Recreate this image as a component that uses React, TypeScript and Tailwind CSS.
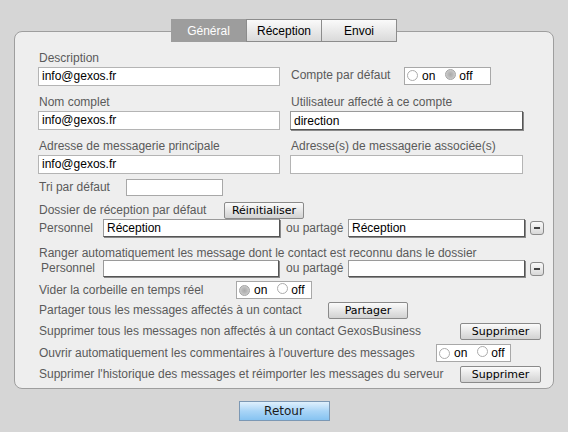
import React from "react";

const label = "text-[12px] leading-[15px] text-[#5a5a5a] whitespace-nowrap";
const field =
  "h-[19px] bg-white border border-[#b4b4b4] pl-[3px] text-[12px] leading-[17px] text-black";
const deepField =
  "bg-white border border-[#9a9a9a] border-r-[#555] border-b-[#555] shadow-[1px_1px_0_#8a8a8a] pl-[3px] text-[12px] text-black flex items-center";
const btn =
  "h-[17px] border border-[#8a8a8a] rounded-[2px] bg-gradient-to-b from-[#fbfbfb] to-[#d2d2d2] text-[11px] leading-[15px] text-black flex items-center justify-center [font-family:'DejaVu_Sans',sans-serif]";

function Radio({ checked }: { checked?: boolean }) {
  return (
    <span
      className={
        "inline-block w-[11px] h-[11px] rounded-full border " +
        (checked
          ? "border-[#a4a4a4] bg-[radial-gradient(circle,#aaaaaa_0%,#bcbcbc_45%,#e0e0e0_100%)]"
          : "border-[#acacac] bg-white")
      }
    />
  );
}

function OnOff({ value, w }: { value?: "on" | "off"; w: string }) {
  return (
    <div className={`${w} h-[18px] bg-white border border-[#a8a8a8] flex items-center pl-[2px] text-[12px] text-black`}>
      <Radio checked={value === "on"} />
      <span className="ml-[4px]">on</span>
      <span className="ml-[10px]">
        <Radio checked={value === "off"} />
      </span>
      <span className="ml-[3px]">off</span>
    </div>
  );
}

function Minus() {
  return (
    <div className="ml-[5px] w-[14px] h-[14px] rounded-[3px] border border-[#8a8a8a] bg-gradient-to-b from-[#fafafa] to-[#d8d8d8] flex items-center justify-center">
      <span className="block w-[6px] h-[2px] bg-[#444]" />
    </div>
  );
}

function Cell({ title, children }: { title: string; children?: React.ReactNode }) {
  return (
    <div className="flex flex-col">
      <div className={`${label} h-[15px] pl-[1px]`}>{title}</div>
      <div className="mt-[1px] h-[19px]">{children}</div>
    </div>
  );
}

export default function App() {
  return (
    <div className="w-[568px] h-[432px] bg-[#d6d6d6] pt-[19px] [font-family:'Liberation_Sans',Arial,sans-serif] overflow-hidden">
      <div className="relative z-10 flex justify-center">
        <div className="flex h-[23px] text-[12px]">
          <div className="w-[75px] bg-[#9d9d9d] text-white flex items-center justify-center">Général</div>
          <div className="w-[76px] border border-[#8c8c8c] bg-gradient-to-b from-[#fafafa] to-[#dadada] flex items-center justify-center text-black">
            Réception
          </div>
          <div className="w-[75px] border border-l-0 border-[#8c8c8c] bg-gradient-to-b from-[#fafafa] to-[#dadada] flex items-center justify-center text-black">
            Envoi
          </div>
        </div>
      </div>

      <div className="-mt-[11px] mx-[14px] w-[540px] rounded-[8px] border border-[#9e9e9e] bg-[#eeeeee] pl-[23px] pt-[19px] pb-[5px]">
        <div className="grid grid-cols-[242px_233px] gap-x-[10px] gap-y-[9px]">
          <Cell title="Description">
            <div className={field}>info@gexos.fr</div>
          </Cell>
          <Cell title="">
            <div className="flex items-center h-[19px] -mt-[1px]">
              <span className={`${label} w-[114px] pl-[1px]`}>Compte par défaut</span>
              <OnOff value="off" w="w-[87px]" />
            </div>
          </Cell>
          <Cell title="Nom complet">
            <div className={field}>info@gexos.fr</div>
          </Cell>
          <Cell title="Utilisateur affecté à ce compte">
            <div className={`${deepField} h-[19px]`}>direction</div>
          </Cell>
          <Cell title="Adresse de messagerie principale">
            <div className={field}>info@gexos.fr</div>
          </Cell>
          <Cell title="Adresse(s) de messagerie associée(s)">
            <div className={`${field} h-[18px]`} />
          </Cell>
        </div>

        <div className="mt-[5px] h-[17px] flex items-center">
          <span className={`${label} w-[88px] pl-[1px]`}>Tri par défaut</span>
          <div className="w-[97px] h-[17px] bg-white border border-[#a8a8a8]" />
        </div>

        <div className="mt-[6px] h-[17px] flex items-center">
          <span className={`${label} w-[186px] pl-[1px]`}>Dossier de réception par défaut</span>
          <div className={`${btn} w-[80px]`}>Réinitialiser</div>
        </div>

        <div className="h-[18px] flex items-center">
          <span className={`${label} w-[65px] pl-[1px]`}>Personnel</span>
          <div className={`${deepField} w-[177px] h-[18px]`}>Réception</div>
          <span className={`${label} ml-[6px] w-[62px]`}>ou partagé</span>
          <div className={`${deepField} w-[177px] h-[18px]`}>Réception</div>
          <Minus />
        </div>

        <div className={`${label} mt-[9px] h-[14px] pl-[1px]`}>
          Ranger automatiquement les message dont le contact est reconnu dans le dossier
        </div>

        <div className="h-[17px] flex items-center">
          <span className={`${label} w-[65px] pl-[3px]`}>Personnel</span>
          <div className={`${deepField} w-[176px] h-[17px]`} />
          <span className={`${label} ml-[7px] w-[62px]`}>ou partagé</span>
          <div className={`${deepField} w-[177px] h-[17px]`} />
          <Minus />
        </div>

        <div className="mt-[4px] h-[18px] flex items-center">
          <span className={`${label} w-[198px] pl-[1px]`}>Vider la corbeille en temps réel</span>
          <OnOff value="on" w="w-[76px]" />
        </div>

        <div className="mt-[3px] h-[17px] flex items-center">
          <span className={`${label} w-[290px] pl-[1px]`}>Partager tous les messages affectés à un contact</span>
          <div className={`${btn} w-[80px]`}>Partager</div>
        </div>

        <div className="mt-[4px] h-[17px] flex items-center">
          <span className={`${label} w-[422px] pl-[1px]`}>
            Supprimer tous les messages non affectés à un contact GexosBusiness
          </span>
          <div className={`${btn} w-[81px]`}>Supprimer</div>
        </div>

        <div className="mt-[4px] h-[18px] flex items-center">
          <span className={`${label} w-[398px] pl-[1px]`}>
            Ouvrir automatiquement les commentaires à l'ouverture des messages
          </span>
          <OnOff w="w-[75px]" />
        </div>

        <div className="mt-[4px] h-[17px] flex items-center">
          <span className={`${label} w-[422px] pl-[1px]`}>
            Supprimer l'historique des messages et réimporter les messages du serveur
          </span>
          <div className={`${btn} w-[81px]`}>Supprimer</div>
        </div>
      </div>

      <div className="mt-[12px] flex justify-center">
        <div className="w-[91px] h-[20px] border border-[#7c98b4] bg-gradient-to-b from-[#dff0fd] via-[#a9d5f7] to-[#86c3f1] flex items-center justify-center text-[12px] text-[#1b1b1b] [font-family:'DejaVu_Sans',sans-serif]">
          Retour
        </div>
      </div>
    </div>
  );
}
